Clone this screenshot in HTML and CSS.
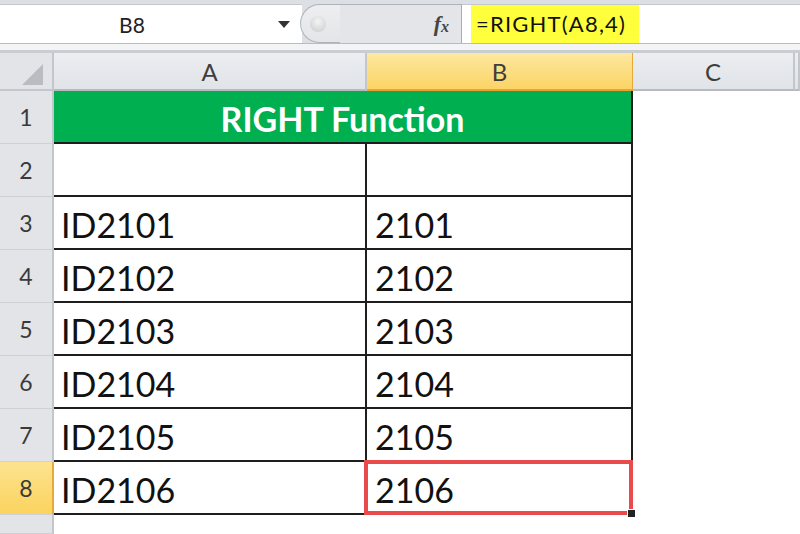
FILE: index.html
```html
<html>

<head>
  <title>RIGHT Function</title>
  <meta charset="utf-8">
  <link rel="stylesheet" href="styles.css">
</head>

<body>
  <div class="formula-bar">
    <div class="name-box">
      <span class="name">B8</span>
      <span class="arrow"></span>
    </div>
    <div class="splitter"><span class="knob"></span></div>
    <div class="fx"><i>f</i><i class="x">x</i></div>
    <div class="formula"><span class="mark">=RIGHT(A8,4)</span></div>
  </div>
  <div class="band"></div>

  <div class="sheet">
    <!-- header row -->
    <div class="corner"><span class="tri"></span></div>
    <div class="col-head">A</div>
    <div class="col-head active">B</div>
    <div class="col-head">C</div>
    <div class="col-head"></div>

    <div class="row-head">1</div>
    <div class="cell title">RIGHT Function</div>
    <div class="blank"></div>
    <div class="blank"></div>

    <div class="row-head">2</div>
    <div class="cell a"></div>
    <div class="cell b"></div>
    <div class="blank"></div>
    <div class="blank"></div>

    <div class="row-head">3</div>
    <div class="cell a">ID2101</div>
    <div class="cell b">2101</div>
    <div class="blank"></div>
    <div class="blank"></div>

    <div class="row-head">4</div>
    <div class="cell a">ID2102</div>
    <div class="cell b">2102</div>
    <div class="blank"></div>
    <div class="blank"></div>

    <div class="row-head">5</div>
    <div class="cell a">ID2103</div>
    <div class="cell b">2103</div>
    <div class="blank"></div>
    <div class="blank"></div>

    <div class="row-head">6</div>
    <div class="cell a">ID2104</div>
    <div class="cell b">2104</div>
    <div class="blank"></div>
    <div class="blank"></div>

    <div class="row-head">7</div>
    <div class="cell a">ID2105</div>
    <div class="cell b">2105</div>
    <div class="blank"></div>
    <div class="blank"></div>

    <div class="row-head active">8</div>
    <div class="cell a">ID2106</div>
    <div class="cell b selected">2106</div>
    <div class="blank"></div>
    <div class="blank"></div>

    <div class="row-head"></div>
    <div class="blank"></div>
    <div class="blank"></div>
    <div class="blank"></div>
    <div class="blank"></div>
  </div>
</body>

</html>
```

FILE: styles.css
```css
* {
  margin: 0;
  padding: 0;
  box-sizing: border-box;
}

body {
  width: 800px;
  height: 534px;
  overflow: hidden;
  background: #fff;
  font-family: Lato, "Liberation Sans", sans-serif;
}

/* formula bar */
.formula-bar {
  display: flex;
  height: 44px;
  padding-top: 4px;
  background: #dcdfe3;
  border-bottom: 1px solid #b8bcc2;
}

.name-box {
  display: flex;
  align-items: center;
  width: 302px;
  background: #fff;
  border-top: 1px solid #c4c7cc;
}

.name {
  flex: 1;
  text-align: center;
  font-size: 21px;
  color: #222;
  padding-right: 14px;
}

.arrow {
  width: 0;
  height: 0;
  margin-right: 12px;
  border-left: 6px solid transparent;
  border-right: 6px solid transparent;
  border-top: 7px solid #333;
}

.splitter {
  display: flex;
  align-items: center;
  width: 40px;
  margin-left: -2px;
  background: linear-gradient(#eceef0, #e3e5e8);
  border: 1px solid #b0b4ba;
  border-right: none;
  border-radius: 22px 0 0 22px;
}

.knob {
  width: 16px;
  height: 16px;
  margin-left: 9px;
  border-radius: 50%;
  background: radial-gradient(circle at 50% 35%, #f4f4f4, #c8cacd);
}

.fx {
  display: flex;
  align-items: center;
  justify-content: flex-end;
  width: 122px;
  padding-right: 12px;
  background: #e3e5e8;
  border-top: 1px solid #b0b4ba;
  border-right: 1px solid #a9adb3;
  font-family: "Liberation Serif", serif;
  font-weight: bold;
  font-size: 22px;
  color: #444;
}

.fx .x {
  font-size: 16px;
  margin-top: 6px;
}

.formula {
  flex: 1;
  padding-left: 9px;
  background: #fff;
  border-top: 1px solid #c4c7cc;
}

.mark {
  display: inline-block;
  height: 100%;
  padding: 0 13px 0 5px;
  line-height: 38px;
  background: #ffff3c;
  font-size: 22px;
  letter-spacing: 1.2px;
  color: #111;
}

.band {
  height: 9px;
  background: #f3f4f6;
  border-bottom: 3px solid #c9ccd1;
}

/* grid */
.sheet {
  display: grid;
  grid-template-columns: 54px 313px 266px 162px 1fr;
  grid-template-rows: 38px repeat(8, 53px) 19px;
}

.corner {
  position: relative;
  background: #e2e4e8;
  border-right: 2px solid #c3c6cb;
  border-bottom: 2px solid #c3c6cb;
}

.tri {
  position: absolute;
  right: 9px;
  bottom: 4px;
  width: 21px;
  height: 21px;
  background: #b9bcc1;
  clip-path: polygon(100% 0, 100% 100%, 0 100%);
}

.col-head {
  display: flex;
  align-items: center;
  justify-content: center;
  background: linear-gradient(#eceef1, #e0e3e7);
  border-right: 2px solid #c3c6cb;
  border-bottom: 2px solid #b7bbc0;
  font-size: 24px;
  color: #3e3e3e;
}

.col-head.active {
  background: linear-gradient(#fde89f, #fbd465);
  border-right: 1px solid #e7a83c;
  border-bottom: 2px solid #eda133;
}

.row-head {
  display: flex;
  align-items: center;
  justify-content: center;
  background: #e2e4e8;
  border-right: 2px solid #c3c6cb;
  border-bottom: 1px solid #cdd0d4;
  font-size: 23px;
  color: #3a3a3a;
}

.row-head.active {
  background: linear-gradient(#fde390, #fbd35e);
  border-right: 2px solid #e7a83c;
}

.cell {
  display: flex;
  align-items: center;
  padding-top: 3px;
  border-bottom: 2px solid #1e1e1e;
  border-right: 2px solid #1e1e1e;
  font-size: 34px;
  color: #111;
}

.cell.a {
  padding-left: 7px;
}

.cell.b {
  padding-left: 8px;
}

.cell.title {
  grid-column: span 2;
  justify-content: center;
  background: #00b050;
  color: #fff;
  font-weight: bold;
  font-size: 34px;
}

.selected {
  position: relative;
}

.selected::after {
  content: "";
  position: absolute;
  left: -3px;
  top: -2px;
  right: -2px;
  bottom: -2px;
  border: 4px solid #e94a4c;
}

.selected::before {
  content: "";
  position: absolute;
  right: -5px;
  bottom: -5px;
  width: 7px;
  height: 7px;
  background: #222;
  border: 1px solid #fff;
  z-index: 1;
}

.blank {
  background: #fff;
}
```
